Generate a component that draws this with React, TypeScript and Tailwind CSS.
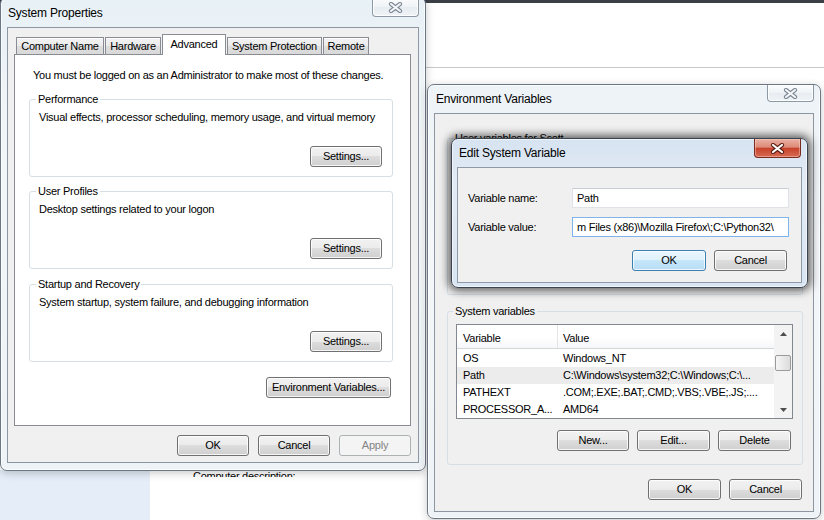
import React from "react";

type Kind = "normal" | "default" | "disabled";

function Btn({ children, cls = "", kind = "normal" }: { children: React.ReactNode; cls?: string; kind?: Kind }) {
  const look =
    kind === "default"
      ? "border-[#3c7fb1] bg-[linear-gradient(#eaf6fd_0%,#dff1fc_50%,#c6e6f9_50%,#b7ddf5_100%)] shadow-[inset_0_0_0_1px_rgba(255,255,255,0.75)] text-black"
      : kind === "disabled"
      ? "border-[#adb2b5] bg-[#f4f4f4] text-[#838383]"
      : "border-[#707070] bg-[linear-gradient(#f2f2f2_0%,#ebebeb_50%,#dddddd_50%,#cfcfcf_100%)] shadow-[inset_0_0_0_1px_rgba(255,255,255,0.8)] text-black";
  return (
    <div className={`flex h-[21px] shrink-0 items-center justify-center rounded-[3px] border leading-none ${look} ${cls}`}>
      {children}
    </div>
  );
}

function XGlyph({ active }: { active?: boolean }) {
  const d = "M3 2 L12 9 M12 2 L3 9";
  return (
    <svg width="15" height="11" viewBox="0 0 15 11" className="block">
      <path d={d} stroke={active ? "#5a1d14" : "#7a8592"} strokeWidth={4.2} strokeLinecap="round" fill="none" />
      <path d={d} stroke={active ? "#ffffff" : "#f3f5f8"} strokeWidth={2.2} strokeLinecap="round" fill="none" />
    </svg>
  );
}

function CloseBtn({ active, cls = "" }: { active?: boolean; cls?: string }) {
  const look = active
    ? "border-[#7a2b20] bg-[linear-gradient(#eab0a3_0%,#dd8b79_45%,#c8432c_52%,#d56a52_100%)] shadow-[inset_0_0_0_1px_rgba(255,215,205,0.45)]"
    : "border-[#8e99a6] bg-[linear-gradient(#fbfcfd_0%,#eff3f6_50%,#e7ecf1_50%,#eff3f7_100%)] shadow-[inset_0_0_0_1px_rgba(255,255,255,0.85)]";
  return (
    <div className={`flex shrink-0 items-center justify-center rounded-b-[4px] border border-t-0 ${look} ${cls}`}>
      <XGlyph active={active} />
    </div>
  );
}

function Group({
  label,
  cls = "",
  labelCls = "",
  children,
}: {
  label: string;
  cls?: string;
  labelCls?: string;
  children?: React.ReactNode;
}) {
  return (
    <div className={`flex shrink-0 flex-col rounded-[3px] border border-[#d5dfe5] ${cls}`}>
      <div className={`-mt-[8px] w-fit whitespace-nowrap px-[2px] leading-[15px] ${labelCls}`}>{label}</div>
      {children}
    </div>
  );
}

function Tab({ children, w, selected }: { children: React.ReactNode; w: string; selected?: boolean }) {
  return selected ? (
    <div className={`-mb-[1px] flex h-[21px] items-start justify-center border border-b-0 border-[#898c95] bg-white pt-[2px] leading-[15px] ${w}`}>
      {children}
    </div>
  ) : (
    <div
      className={`flex h-[17px] items-center justify-center border border-b-0 border-[#898c95] bg-[linear-gradient(#f3f3f3_0%,#ebebeb_50%,#dedede_50%,#d9d9d9_100%)] shadow-[inset_0_1px_0_#ffffff] leading-[15px] ${w}`}
    >
      {children}
    </div>
  );
}

function SysProps() {
  return (
    <div className="absolute left-0 top-[-3px] flex h-[474px] w-[426px] flex-col rounded-[7px] border border-[#6b7784] bg-[linear-gradient(180deg,#e8f1f6_0%,#f3f6f9_35%,#edf3f7_100%)] px-[6px] pb-[7px] shadow-[0_2px_8px_rgba(0,0,0,0.22),inset_0_0_0_1px_rgba(255,255,255,0.7)]">
      <div className="flex h-[29px] items-start justify-between">
        <div className="self-center pl-[1px] text-[12px] tracking-[-0.2px]">System Properties</div>
        <CloseBtn cls="h-[19px] w-[47px]" />
      </div>
      <div className="flex flex-1 flex-col border border-[#8d97a1] bg-[#f0f0f0] pt-[6px]">
        <div className="relative z-10 ml-[8px] flex h-[20px] items-end gap-[1px]">
          <Tab w="w-[88px]">Computer Name</Tab>
          <Tab w="w-[56px]">Hardware</Tab>
          <Tab w="w-[64px]" selected>
            Advanced
          </Tab>
          <Tab w="w-[95px]">System Protection</Tab>
          <Tab w="w-[46px]">Remote</Tab>
        </div>
        <div className="ml-[6px] mr-[7px] flex h-[372px] flex-col border border-[#898c95] bg-white pt-[13px]">
          <div className="pl-[18px] leading-[15px]">
            You must be logged on as an Administrator to make most of these changes.
          </div>
          <Group label="Performance" cls="ml-[14px] mt-[16px] h-[78px] w-[364px]" labelCls="ml-[6px] bg-white">
            <div className="mt-[3px] pl-[9px] leading-[15px]">
              Visual effects, processor scheduling, memory usage, and virtual memory
            </div>
            <Btn cls="mr-[10px] mt-[21px] w-[72px] self-end">Settings...</Btn>
          </Group>
          <Group label="User Profiles" cls="ml-[14px] mt-[14px] h-[78px] w-[364px]" labelCls="ml-[6px] bg-white">
            <div className="mt-[3px] pl-[9px] leading-[15px]">Desktop settings related to your logon</div>
            <Btn cls="mr-[10px] mt-[21px] w-[72px] self-end">Settings...</Btn>
          </Group>
          <Group label="Startup and Recovery" cls="ml-[14px] mt-[15px] h-[78px] w-[364px]" labelCls="ml-[6px] bg-white">
            <div className="mt-[3px] pl-[9px] leading-[15px]">
              System startup, system failure, and debugging information
            </div>
            <Btn cls="mr-[10px] mt-[21px] w-[72px] self-end">Settings...</Btn>
          </Group>
          <Btn cls="mr-[19px] mt-[15px] w-[125px] self-end">Environment Variables...</Btn>
        </div>
        <div className="mr-[7px] mt-[9px] flex justify-end gap-[9px]">
          <Btn cls="w-[72px]">OK</Btn>
          <Btn cls="w-[72px]">Cancel</Btn>
          <Btn cls="w-[72px]" kind="disabled">
            Apply
          </Btn>
        </div>
      </div>
    </div>
  );
}

function Arrow({ up }: { up?: boolean }) {
  return (
    <svg width="7" height="4" viewBox="0 0 7 4" className="block">
      <path d={up ? "M0 4 L3.5 0 L7 4 Z" : "M0 0 L3.5 4 L7 0 Z"} fill="#4d4d4d" />
    </svg>
  );
}

const rows: { v: string; val: string; sel?: boolean }[] = [
  { v: "OS", val: "Windows_NT" },
  { v: "Path", val: "C:\\Windows\\system32;C:\\Windows;C:\\...", sel: true },
  { v: "PATHEXT", val: ".COM;.EXE;.BAT;.CMD;.VBS;.VBE;.JS;...." },
  { v: "PROCESSOR_A...", val: "AMD64" },
];

function ListView() {
  return (
    <div className="ml-[8px] mt-[5px] flex h-[95px] w-[337px] shrink-0 border border-[#828790] bg-white">
      <div className="flex flex-1 flex-col">
        <div className="flex h-[24px] border-b border-[#d5d5d5] bg-[linear-gradient(#ffffff_0%,#ffffff_55%,#f6f7f9_100%)]">
          <div className="flex w-[101px] items-center border-r border-[#e5e5e5] pl-[6px] pt-[3px]">Variable</div>
          <div className="flex items-center pl-[5px] pt-[3px]">Value</div>
        </div>
        <div className="mt-[1px] flex flex-col">
          {rows.map((r) => (
            <div key={r.v} className={`flex h-[17px] items-center whitespace-nowrap ${r.sel ? "bg-[#ececec]" : ""}`}>
              <div className="w-[101px] pl-[6px]">{r.v}</div>
              <div className="pl-[5px]">{r.val}</div>
            </div>
          ))}
        </div>
      </div>
      <div className="flex w-[18px] flex-col bg-[#f3f3f3]">
        <div className="flex h-[17px] items-center justify-center">
          <Arrow up />
        </div>
        <div className="mx-[1px] mt-[13px] h-[16px] rounded-[2px] border border-[#9b9b9b] bg-[linear-gradient(90deg,#f6f6f6_0%,#e9e9e9_50%,#dcdcdc_100%)]" />
        <div className="flex-1" />
        <div className="flex h-[17px] items-center justify-center">
          <Arrow />
        </div>
      </div>
    </div>
  );
}

function EnvVars() {
  return (
    <div className="absolute left-[427px] top-[84px] flex h-[435px] w-[394px] flex-col rounded-[7px] border border-[#6b7784] bg-[linear-gradient(180deg,#edf3f7_0%,#f5f7fa_35%,#eef3f7_100%)] px-[6px] pb-[6px] shadow-[0_2px_8px_rgba(0,0,0,0.22),inset_0_0_0_1px_rgba(255,255,255,0.7)]">
      <div className="flex h-[28px] items-start justify-between">
        <div className="self-center pl-[2px] text-[12px] tracking-[-0.2px]">Environment Variables</div>
        <CloseBtn cls="h-[17px] w-[47px]" />
      </div>
      <div className="flex flex-1 flex-col border border-[#8d97a1] bg-[#f0f0f0]">
        <Group label="User variables for Scott" cls="ml-[12px] mt-[24px] h-[157px] w-[356px]" labelCls="ml-[5px] bg-[#f0f0f0]" />
        <Group label="System variables" cls="ml-[12px] mt-[16px] h-[154px] w-[356px]" labelCls="ml-[5px] bg-[#f0f0f0]">
          <ListView />
          <div className="mr-[11px] mt-[11px] flex justify-end gap-[8px]">
            <Btn cls="w-[72px]">New...</Btn>
            <Btn cls="w-[73px]">Edit...</Btn>
            <Btn cls="w-[73px]">Delete</Btn>
          </div>
        </Group>
        <div className="mr-[11px] mt-[14px] flex justify-end gap-[8px]">
          <Btn cls="w-[73px]">OK</Btn>
          <Btn cls="w-[73px]">Cancel</Btn>
        </div>
      </div>
    </div>
  );
}

function EditVar() {
  return (
    <div className="absolute left-[451px] top-[138px] flex h-[150px] w-[357px] flex-col rounded-[7px] border border-[#3a4450] bg-[linear-gradient(180deg,#d6e3f1_0%,#e3ebf5_30%,#d9e5f2_100%)] px-[5px] pb-[4px] shadow-[0_0_9px_3px_rgba(0,0,0,0.6),inset_0_0_0_1px_rgba(255,255,255,0.6)]">
      <div className="flex h-[28px] items-start justify-between">
        <div className="self-center pl-[2px] text-[12px] tracking-[-0.2px]">Edit System Variable</div>
        <CloseBtn active cls="mr-[1px] h-[19px] w-[47px]" />
      </div>
      <div className="flex flex-1 flex-col border border-[#8e9aa7] bg-[#f0f0f0] pl-[10px]">
        <div className="mt-[20px] flex items-center">
          <div className="w-[104px]">Variable name:</div>
          <div className="flex h-[20px] w-[217px] items-center border border-[#dfe3e8] border-t-[#c9ced5] bg-white pl-[4px]">
            Path
          </div>
        </div>
        <div className="mt-[9px] flex items-center">
          <div className="w-[104px]">Variable value:</div>
          <div className="flex h-[20px] w-[217px] items-center overflow-hidden whitespace-nowrap border border-[#7eb4ea] bg-white pl-[4px]">
            {"m Files (x86)\\Mozilla Firefox\\;C:\\Python32\\"}
          </div>
        </div>
        <div className="mr-[14px] mt-[13px] flex justify-end gap-[8px]">
          <Btn kind="default" cls="w-[74px]">
            OK
          </Btn>
          <Btn cls="w-[73px]">Cancel</Btn>
        </div>
      </div>
    </div>
  );
}

export default function App() {
  return (
    <div className="relative h-[520px] w-[824px] overflow-hidden bg-white font-['Liberation_Sans',Arial,sans-serif] text-[11px] tracking-[-0.25px] text-black">
      <div className="flex h-full flex-col">
        <div className="h-[3px] bg-[#3b4046]" />
        <div className="h-[64px] bg-white" />
        <div className="h-[1px] bg-[#c9c9c9]" />
        <div className="flex-1 bg-white" />
        <div className="flex h-[50px]">
          <div className="w-[150px] bg-[#e4edf8]" />
          <div className="flex-1 bg-white pl-[43px]">
            <div className="h-[7px] overflow-hidden">
              <div className="-mt-[1px] leading-[15px]">Computer description:</div>
            </div>
          </div>
        </div>
      </div>
      <SysProps />
      <EnvVars />
      <EditVar />
    </div>
  );
}
